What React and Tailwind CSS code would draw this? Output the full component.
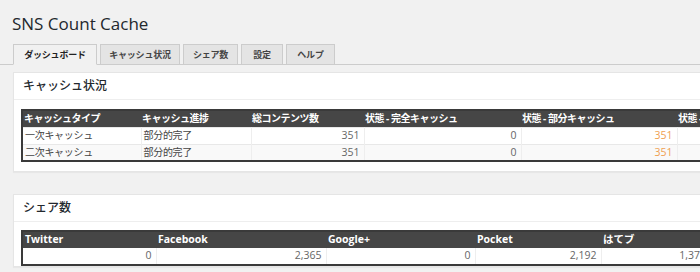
import React from "react";

const jp = { fontFamily: '"Open Sans", "Noto Sans CJK JP", sans-serif' };

function Tabs() {
  const tabs = [
    { label: "ダッシュボード", w: "w-[84px]", active: true },
    { label: "キャッシュ状況", w: "w-[80px]" },
    { label: "シェア数", w: "w-[55px]" },
    { label: "設定", w: "w-[42px]" },
    { label: "ヘルプ", w: "w-[49px]" },
  ];
  return (
    <div className="flex items-end gap-[3px] pl-[13px] border-b border-[#cccccc] h-[65px] w-[1000px]">
      {tabs.map((t) => (
        <div
          key={t.label}
          className={`${t.w} h-[21px] -mb-px flex items-center justify-center border border-[#cccccc] text-[9px] font-semibold tracking-[-0.2px] ${
            t.active ? "bg-[#f1f1f1] border-b-[#f1f1f1] text-[#222]" : "bg-[#e4e4e4] text-[#444]"
          }`}
          style={jp}
        >
          {t.label}
        </div>
      ))}
    </div>
  );
}

function Panel({ title, children }) {
  return (
    <div className="ml-[13px] w-[900px] bg-white border border-[#e5e5e5] shadow-[0_1px_1px_rgba(0,0,0,0.04)]">
      <div className="h-[27px] flex items-center pl-[9px] border-b border-[#eeeeee] text-[12px] font-medium text-[#23282d]" style={jp}>
        {title}
      </div>
      {children}
    </div>
  );
}

function CacheTable() {
  const widths = [119, 110, 113, 157, 156, 156];
  const heads = ["キャッシュタイプ", "キャッシュ進捗", "総コンテンツ数", "状態 - 完全キャッシュ", "状態 - 部分キャッシュ", "状態 - 未キャッシュ"];
  const rows = [
    ["一次キャッシュ", "部分的完了", "351", "0", "351", "0"],
    ["二次キャッシュ", "部分的完了", "351", "0", "351", "0"],
  ];
  return (
    <div className="pt-[9px] pb-[9px] pl-[7px]">
      <table className="table-fixed border-collapse border-2 border-[#3a3a3a] text-[10px]" style={{ ...jp, width: widths.reduce((a, b) => a + b, 0) }}>
        <colgroup>
          {widths.map((w, i) => (
            <col key={i} style={{ width: w }} />
          ))}
        </colgroup>
        <thead>
          <tr className="bg-[#464646] h-[17px]">
            {heads.map((h) => (
              <th key={h} className="text-left font-bold text-white px-[1px] py-0 whitespace-nowrap tracking-[-0.5px]">
                {h}
              </th>
            ))}
          </tr>
        </thead>
        <tbody>
          {rows.map((r, ri) => (
            <tr key={ri} className={`h-[17px] ${ri === 0 ? "bg-white" : "bg-[#f9f9f9]"} border-t border-[#e8e8e8]`}>
              {r.map((c, ci) => (
                <td
                  key={ci}
                  className={`py-0 border-l border-[#eeeeee] whitespace-nowrap ${
                    ci < 2 ? "text-left px-[2px] text-[#444] tracking-[-0.3px]" : "text-right px-[4px] text-[#666] text-[10.5px]"
                  } ${ci === 4 ? "text-[#f0a050]" : ""}`}
                >
                  {c}
                </td>
              ))}
            </tr>
          ))}
        </tbody>
      </table>
    </div>
  );
}

function ShareTable() {
  const widths = [134, 170, 149, 126, 110];
  const heads = ["Twitter", "Facebook", "Google+", "Pocket", "はてブ"];
  const row = ["0", "2,365", "0", "2,192", "1,373"];
  return (
    <div className="pt-[8px] pl-[7px]">
      <table className="table-fixed border-collapse border-2 border-[#3a3a3a] text-[10.5px]" style={{ ...jp, width: widths.reduce((a, b) => a + b, 0) }}>
        <colgroup>
          {widths.map((w, i) => (
            <col key={i} style={{ width: w }} />
          ))}
        </colgroup>
        <thead>
          <tr className="bg-[#464646] h-[17px]">
            {heads.map((h) => (
              <th key={h} className="text-left font-bold text-white px-[2px] py-0 whitespace-nowrap">
                {h}
              </th>
            ))}
          </tr>
        </thead>
        <tbody>
          <tr className="h-[17px] bg-white">
            {row.map((c, ci) => (
              <td key={ci} className="py-0 border-l border-[#eeeeee] text-right px-[4px] text-[#666] whitespace-nowrap">
                {c}
              </td>
            ))}
          </tr>
        </tbody>
      </table>
    </div>
  );
}

export default function App() {
  return (
    <div className="w-[700px] h-[272px] overflow-hidden bg-[#f1f1f1] relative">
      <div
        className="absolute left-[12px] top-[12px] text-[17px] text-[#23282d] leading-[23px]"
        style={{ fontFamily: '"Open Sans", sans-serif' }}
      >
        SNS Count Cache
      </div>
      <Tabs />
      <div className="h-[7px]" />
      <Panel title="キャッシュ状況">
        <CacheTable />
      </Panel>
      <div className="h-[22px]" />
      <Panel title="シェア数">
        <ShareTable />
      </Panel>
    </div>
  );
}
